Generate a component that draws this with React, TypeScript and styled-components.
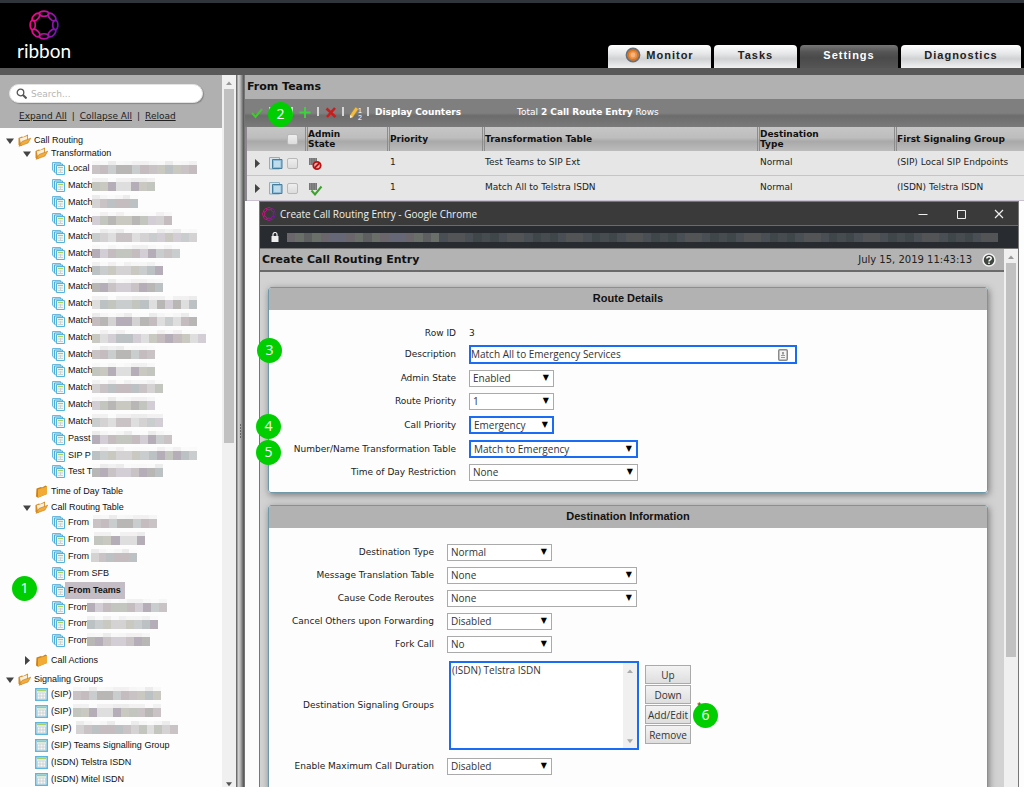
import React from "react";
import styled, { createGlobalStyle, css } from "styled-components";

const verdana = `"DejaVu Sans", Verdana, sans-serif`;
const arial = `"Liberation Sans", Arial, sans-serif`;
const segoe = `"Open Sans", "Segoe UI", sans-serif`;

const GlobalStyle = createGlobalStyle`
  *, *::before, *::after { box-sizing: border-box; }
  body { margin: 0; background: #fdfdfd; font-family: ${verdana}; font-size: 9px; color: #222; }
  ul { list-style: none; margin: 0; padding: 0; }
  svg { display: block; flex: none; }
`;

const Page = styled.div`
  height: 100vh;
  display: flex;
  flex-direction: column;
  overflow: hidden;
`;

/* ---------- top banner ---------- */

const Banner = styled.header`
  flex: none;
  height: 75px;
  display: flex;
  justify-content: space-between;
  align-items: flex-end;
  padding: 0 3px 0 17px;
  background: #000;
  border-top: 3px solid #2f353b;
  border-bottom: 7px solid #595959;
`;

const Brand = styled.div`
  align-self: stretch;
  display: flex;
  flex-direction: column;
  align-items: center;
  padding-top: 7px;
  color: #fff;
  font: 400 19px/22px Lato, sans-serif;
`;

const Tabs = styled.nav`
  display: flex;
  gap: 3px;
`;

const Tab = styled.button<{ $width: number; $active?: boolean }>`
  width: ${(p) => p.$width}px;
  height: 23px;
  display: flex;
  align-items: center;
  justify-content: center;
  gap: 5px;
  padding: 0 0 3px;
  border: 0;
  border-radius: 4px 4px 0 0;
  font: bold 11px/14px ${arial};
  letter-spacing: 1px;
  color: ${(p) => (p.$active ? "#fff" : "#222")};
  background: ${(p) =>
    p.$active
      ? "linear-gradient(#777, #555 30%, #4a4a4a 55%, #555)"
      : "linear-gradient(#fff, #e4e5e7 40%, #cfd1d3 60%, #f2f2f2)"};
`;

/* ---------- left tree ---------- */

const Columns = styled.div`
  flex: 1;
  min-height: 0;
  display: flex;
`;

const Sidebar = styled.aside`
  flex: none;
  width: 222px;
`;

const SearchArea = styled.div`
  background: #b0b0b0;
  height: 53px;
  padding: 9px 19px 0 9px;
`;

const SearchBox = styled.label`
  display: flex;
  align-items: center;
  gap: 4px;
  height: 19px;
  padding: 0 6px;
  background: #fff;
  border: 1px solid #e4e4e4;
  border-radius: 10px;
  box-shadow: 1px 1px 1px #888;
`;

const SearchInput = styled.input`
  flex: 1;
  min-width: 0;
  border: 0;
  outline: 0;
  padding: 0;
  background: none;
  font: 9px/12px ${verdana};
  &::placeholder { color: #b5b5b5; opacity: 1; }
`;

const TreeLinks = styled.div`
  display: flex;
  gap: 5px;
  padding: 7px 0 0 10px;
  line-height: 12px;
  a { color: #222; }
`;

const Tree = styled.ul`
  padding-top: 6px;
  font-family: ${arial};
  color: #111;
`;

const TreeRow = styled.div<{ $level: number; $kind: "open" | "closed" | "leaf" }>`
  position: relative;
  display: flex;
  align-items: center;
  gap: 3px;
  height: ${(p) => (p.$kind === "leaf" ? 17 : p.$kind === "open" ? 13 : 19)}px;
  padding-left: ${(p) => 6 + p.$level * 17}px;
  margin-top: ${(p) => (p.$kind === "closed" ? 2 : 0)}px;
`;

const SectionItem = styled.li`
  & + & { margin-top: 3px; }
`;

const LeafItem = styled.li`
  &:nth-child(6n) ${TreeRow} { height: 16px; }
`;

const Twisty = styled.span`
  width: 9px;
  flex: none;
`;

const TreeText = styled.span<{ $width?: number; $selected?: boolean }>`
  line-height: 17px;
  white-space: nowrap;
  flex: none;
  ${(p) => p.$width && css`width: ${p.$width}px;`}
  ${(p) =>
    p.$selected &&
    css`
      margin-left: -3px;
      padding: 0 4px 0 3px;
      font-weight: bold;
      background: #c5bdc6;
    `}
`;

const MosaicBox = styled.span<{ $width: number; $gap: number }>`
  position: relative;
  flex: none;
  width: ${(p) => p.$width}px;
  margin: 0 0 3px ${(p) => p.$gap - 3}px;
  display: grid;
  grid-template-rows: 4px 9px;
`;

const MosaicLine = styled.span`
  display: flex;
`;

const Tile = styled.i<{ $color: string }>`
  flex: 1;
  background: ${(p) => p.$color};
`;

/* ---------- scroll bars and splitter ---------- */

const ScrollTrack = styled.div`
  flex: none;
  width: 14px;
  display: flex;
  flex-direction: column;
  align-items: center;
  justify-content: space-between;
  padding: 5px 0 0;
  background: #f0f0f0;
`;

const ScrollThumb = styled.div<{ $share: number }>`
  width: 10px;
  height: ${(p) => p.$share}%;
  margin: 3px 0 auto;
  background: #c1c1c1;
`;

const Splitter = styled.div`
  flex: none;
  width: 9px;
  display: flex;
  align-items: center;
  justify-content: center;
  background: linear-gradient(90deg, #6e6e6e 0 1px, #d5d5d5 2px, #bdbdbd 4px, #6a6a6a 7px, #4f4f4f 8px, #999 9px);
`;

/* ---------- main pane ---------- */

const Main = styled.main`
  flex: 1;
  min-width: 0;
  display: flex;
  flex-direction: column;
`;

const PaneTitle = styled.h1`
  margin: 0;
  height: 24px;
  padding-left: 2px;
  background: #b1b1b1;
  color: #111;
  font: bold 11px/24px ${verdana};
`;

const Toolbar = styled.div`
  position: relative;
  height: 28px;
  display: flex;
  align-items: center;
  padding: 0 6px 3px;
  background: linear-gradient(#7f7f7f 0 50%, #6c6c6c 60%, #7a7a7a);
  color: #fff;
  white-space: nowrap;
`;

const ToolButton = styled.button`
  width: 12px;
  height: 16px;
  padding: 2px 0 0;
  border: 0;
  background: none;
`;

const Divider = styled.span<{ $before?: number; $after?: number }>`
  width: 2px;
  height: 9px;
  margin: 0 ${(p) => p.$after ?? 6}px 0 ${(p) => p.$before ?? 6}px;
  background: #d6d6d6;
`;

const TextButton = styled.button`
  padding: 0;
  border: 0;
  background: none;
  color: #fff;
  font: bold 9px/12px ${verdana};
`;

const RowTotal = styled.span`
  margin-left: 56px;
  line-height: 12px;
`;

const TableFrame = styled.div`
  padding-left: 2px;
  background: #8b878c;
`;

const Table = styled.table`
  width: 100%;
  table-layout: fixed;
  border-collapse: separate;
  border-spacing: 0;
  background: #e6e6e6;
`;

const Th = styled.th<{ $width?: number }>`
  width: ${(p) => (p.$width ? `${p.$width}px` : "auto")};
  height: 24px;
  padding: 0;
  border-left: 3px double #8c8c8c;
  background: linear-gradient(#c6c6c6, #bdbdbd 45%, #a9a9a9 60%, #bcbcbc);
  color: #111;
  text-align: left;
  font: bold 9px/10px ${verdana};
  &:first-child { border-left: 0; }
`;

const Td = styled.td`
  height: 25px;
  padding: 0 0 2px 3px;
  border-bottom: 1px solid #c9c0d2;
  line-height: 12px;
  white-space: nowrap;
`;

const StateCell = styled(Td)`
  padding-top: 2px;
  padding-bottom: 0;
`;

const RowTools = styled.div<{ $head?: boolean }>`
  display: flex;
  align-items: center;
  justify-content: flex-end;
  gap: 4px;
  padding-right: 7px;
  padding-top: ${(p) => (p.$head ? 0 : 2)}px;
`;

const Check = styled.input`
  appearance: none;
  width: 11px;
  height: 11px;
  margin: 0;
  border: 1px solid #b9b9b9;
  border-radius: 2px;
  background: linear-gradient(#eee, #dcdcdc);
`;

/* ---------- pop-up browser window ---------- */

const Window = styled.section`
  flex: 1;
  min-height: 0;
  margin: 0 5px 0 14px;
  display: flex;
  flex-direction: column;
  border: solid #777;
  border-width: 1px 1px 0;
`;

const WindowTitle = styled.div`
  flex: none;
  height: 24px;
  display: flex;
  align-items: center;
  gap: 4px;
  padding: 0 14px 0 2px;
  background: #3a3a3a;
  border-bottom: 1px solid #6b6b6b;
  color: #f0f0f0;
  font: 10px/14px ${segoe};
`;

const WindowControls = styled.div`
  display: flex;
  gap: 28px;
  margin-left: auto;
`;

const WindowButton = styled.button`
  padding: 0;
  border: 0;
  background: none;
`;

const AddressBar = styled.div`
  flex: none;
  height: 23px;
  display: flex;
  align-items: center;
  gap: 8px;
  padding: 0 20px 0 11px;
  background: #282c30;
  border-bottom: 1px solid #777;
`;

const AddressTiles = styled.div`
  flex: 1;
  height: 9px;
  display: flex;
`;

const WindowBody = styled.div`
  flex: 1;
  min-height: 0;
  display: flex;
  background: #d2d2d2;
`;

const WindowContent = styled.div`
  flex: 1;
  min-width: 0;
`;

const DialogHead = styled.div`
  height: 23px;
  display: flex;
  align-items: center;
  gap: 10px;
  padding: 0 8px 0 2px;
  background: #b3b3b3;
  border-bottom: 2px solid #6b6b6b;
`;

const DialogTitle = styled.h2`
  margin: 0 auto 0 0;
  color: #111;
  font: bold 11px/14px ${verdana};
`;

const Stamp = styled.time`
  font-size: 10px;
`;

const Panels = styled.div`
  display: flex;
  flex-direction: column;
  gap: 12px;
  padding: 15px 16px 0 8px;
`;

const Panel = styled.fieldset`
  min-width: 0;
  margin: 0;
  padding: 0;
  border: 1px solid #6f98a8;
  border-radius: 3px;
  background: #fdfdfd;
  box-shadow: 1px 2px 7px #777;
`;

const PanelTitle = styled.h3`
  margin: 0;
  padding-bottom: 2px;
  background: #b2b2b2;
  border-radius: 2px 2px 0 0;
  color: #111;
  text-align: center;
  font: bold 11px/20px ${arial};
`;

const Fields = styled.div<{ $label: number; $top: number; $bottom: number }>`
  display: grid;
  row-gap: 6px;
  padding: ${(p) => p.$top}px 0 ${(p) => p.$bottom}px;
  --label: ${(p) => p.$label}px;
`;

const Field = styled.div`
  position: relative;
  display: grid;
  grid-template-columns: var(--label) auto;
  column-gap: 13px;
  align-items: center;
  justify-content: start;
`;

const Label = styled.label`
  text-align: right;
  line-height: 11px;
  white-space: nowrap;
`;

const PlainValue = styled.output`
  line-height: 11px;
`;

const outline = css<{ $marked?: boolean }>`
  border: ${(p) => (p.$marked ? "2px solid #1a6cf5" : "1px solid #aaa")};
`;

const SelectBox = styled.span<{ $width: number; $marked?: boolean }>`
  position: relative;
  width: ${(p) => p.$width}px;
  height: ${(p) => (p.$marked ? 18 : 17)}px;
  display: flex;
  background: #fff;
  ${outline}
  &::after {
    content: "▼";
    position: absolute;
    right: 4px;
    top: 0;
    font: 8px/14px ${verdana};
    color: #000;
    pointer-events: none;
  }
`;

const Select = styled.select`
  appearance: none;
  flex: 1;
  border: 0;
  outline: 0;
  padding: 0 14px 0 3px;
  background: none;
  color: #333;
  font: 10px/15px ${segoe};
`;

const InputBox = styled.span<{ $marked?: boolean }>`
  width: 328px;
  height: 19px;
  display: flex;
  align-items: center;
  padding-right: 7px;
  background: #fff;
  ${outline}
`;

const TextInput = styled.input`
  flex: 1;
  border: 0;
  outline: 0;
  padding: 0;
  background: none;
  color: #333;
  font: 10px/15px ${segoe};
`;

const GroupPicker = styled.div`
  display: flex;
  align-items: center;
  gap: 6px;
  padding: 2px 0 2px 2px;
`;

const ListFrame = styled.div`
  width: 190px;
  height: 89px;
  display: flex;
  background: #fff;
  border: 2px solid #1a6cf5;
`;

const ListScroll = styled(ScrollTrack)`
  padding-bottom: 4px;
`;

const List = styled.select`
  flex: 1;
  min-width: 0;
  border: 0;
  outline: 0;
  padding: 0;
  background: none;
  scrollbar-width: none;
  color: #333;
  font: 10px/14px ${segoe};
  option { padding: 0 1px; min-height: 14px; }
`;

const ButtonStack = styled.div`
  display: grid;
  gap: 1px;
  padding-bottom: 2px;
`;

const PushButton = styled.button`
  width: 46px;
  height: 19px;
  padding: 0;
  border: 1px solid #aaa;
  background: linear-gradient(#f3f3f3, #dedede);
  color: #333;
  font: 10px/14px ${segoe};
`;

const Badge = styled.span<{ $left: number; $top: number }>`
  position: absolute;
  left: ${(p) => p.$left}px;
  top: ${(p) => p.$top}px;
  z-index: 2;
  width: 25px;
  height: 25px;
  border-radius: 50%;
  background: #00ce00;
  color: #fff;
  text-align: center;
  font: 14px/24px ${segoe};
`;

/* ---------- drawings ---------- */

function RingMark({ size, id }: { size: number; id: string }) {
  return (
    <svg width={size} height={size} viewBox="0 0 30 30" fill="none" aria-hidden>
      <defs>
        <linearGradient id={id} gradientUnits="userSpaceOnUse" x1="0" y1="12" x2="30" y2="18">
          <stop offset="0" stopColor="#f5087f" />
          <stop offset="0.5" stopColor="#c010a0" />
          <stop offset="1" stopColor="#6418b4" />
        </linearGradient>
      </defs>
      <g stroke={`url(#${id})`} strokeWidth="1.7">
        {[0, 45, 90, 135, 180, 225, 270, 315].map((a) => {
          const r = (a * Math.PI) / 180;
          const at = (along: number, out: number) =>
            `${(15 + (11.3 + out) * Math.cos(r) - along * Math.sin(r)).toFixed(2)} ${(15 + (11.3 + out) * Math.sin(r) + along * Math.cos(r)).toFixed(2)}`;
          return (
            <path
              key={a}
              d={`M${at(-5, 0)}C${at(-4, 3.4)} ${at(4, 3.4)} ${at(5, 0)}C${at(4, -3.4)} ${at(-4, -3.4)} ${at(-5, 0)}Z`}
            />
          );
        })}
      </g>
    </svg>
  );
}

const Arrow = ({ dir, color = "#444", w = 8 }: { dir: "up" | "down" | "right"; color?: string; w?: number }) => (
  <svg width={w} height={dir === "right" ? 9 : 6} viewBox={dir === "right" ? "0 0 8 9" : "0 0 8 6"} aria-hidden>
    <path fill={color} d={dir === "up" ? "M1 5L4 1.5 7 5Z" : dir === "down" ? "M0 .5H8L4 6Z" : "M2 0L7 4.5 2 9Z"} />
  </svg>
);

const FolderOpen = () => (
  <svg width="13" height="13" viewBox="0 0 13 13" aria-hidden>
    <path d="M.5 4L4 2.500 5 3 10 .5V6L3 12 .5 11Z" fill="#d68a1e" />
    <path d="M1.800 4.500L9.200 2V7L3 10Z" fill="#f8efdc" />
    <path d="M1 12.300L4 7.500 12.700 4.200 10 9Z" fill="#f3ad3c" stroke="#c47a18" strokeWidth=".6" />
  </svg>
);

const FolderClosed = () => (
  <svg width="13" height="13" viewBox="0 0 13 13" aria-hidden>
    <path d="M1.500 3.500L6 2 7 2.500 10.500 .5 12 1.500V9L3 12.700 1 11.500Z" fill="#c98218" />
    <path d="M3 4.500L12 1.500V9L3 12.500Z" fill="#f2ab35" />
  </svg>
);

const PagesIcon = () => (
  <svg width="13" height="13" viewBox="0 0 13 13" aria-hidden>
    <path d="M.5 .5H8.5V10H2.5L.5 8Z" fill="#d6eef8" stroke="#6bb9dc" />
    <path d="M2.500 2H10.500V11.500H4L2.500 10Z" fill="#d6eef8" stroke="#4fabd6" />
    <path d="M4.500 3.500H12.500V12.500H4.500Z" fill="#f2f6f6" stroke="#55b4de" />
    <path d="M6 5.500H11" stroke="#a9cf63" strokeWidth="1.2" />
    <path d="M6 8H11M6 10.500H11M8.500 7V11" stroke="#cdd3d3" />
  </svg>
);

const SheetIcon = () => (
  <svg width="13" height="13" viewBox="0 0 13 13" aria-hidden>
    <path d="M.75 .75H12.250V12.250H.75Z" fill="#e6f2f7" stroke="#5db6e0" strokeWidth="1.500" />
    <path d="M2 2.500H11" stroke="#a9cf63" strokeWidth="1.4" />
    <path d="M2.500 5H10.500V11H2.500ZM2.500 8H10.500M5 5V11M8 5V11" fill="#f7f7f7" stroke="#c6cdcf" strokeWidth=".8" />
  </svg>
);

const CheckIcon = () => (
  <svg width="12" height="13" viewBox="0 0 12 13" fill="none" aria-hidden>
    <path d="M1 7L4.500 11 11 3" stroke="#45c832" strokeWidth="2" />
  </svg>
);
const PlusIcon = () => (
  <svg width="12" height="13" viewBox="0 0 12 13" aria-hidden>
    <path d="M6 1V12M.5 6.500H11.500" stroke="#3fd03f" strokeWidth="2" />
  </svg>
);
const CrossIcon = () => (
  <svg width="12" height="13" viewBox="0 0 12 13" aria-hidden>
    <path d="M1.500 2.500L10.500 11M10 2L2 11" stroke="#cc1c1c" strokeWidth="2.600" />
  </svg>
);
const PencilIcon = () => (
  <svg width="14" height="14" viewBox="0 0 14 14" aria-hidden>
    <path d="M1 9L6.500 1 9.500 3 4 11 1 12Z" fill="#f2bd42" stroke="#a8842c" strokeWidth=".6" />
    <path d="M1 9L4 11 1 12Z" fill="#f5ead0" />
    <text x="9" y="7" fontSize="7" fill="#fff" fontFamily="Liberation Sans">1</text>
    <text x="9" y="14" fontSize="7" fill="#fff" fontFamily="Liberation Sans">2</text>
  </svg>
);

const DetailIcon = () => (
  <svg width="14" height="13" viewBox="0 0 14 13" aria-hidden>
    <path d="M.5 .5H10.500V12H.5Z" fill="#d8e4ea" stroke="#8fb0c0" />
    <path d="M3.500 2.500H13V11.500H3.500Z" fill="#8fbbd6" stroke="#457d9d" />
    <path d="M5 4H11.500V10H5Z" fill="#bfdcec" />
  </svg>
);

const StateIcon = ({ on }: { on: boolean }) => (
  <svg width="15" height="14" viewBox="0 0 15 14" aria-hidden>
    <path d="M1 1H9V8H1Z" fill="#777" />
    <path d="M2.500 1V8M5 1V8M7.500 1V8" stroke="#999" strokeWidth=".6" />
    {on ? (
      <path d="M3.500 8.500L7 12.500 13.500 4.500" fill="none" stroke="#3da22d" strokeWidth="2" />
    ) : (
      <g>
        <circle cx="9" cy="8.500" r="3.700" fill="#e9b5b5" stroke="#b81414" strokeWidth="1.800" />
        <path d="M6.500 11L11.500 6" stroke="#b81414" strokeWidth="1.800" />
      </g>
    )}
  </svg>
);

const MonitorDot = () => (
  <svg width="16" height="16" viewBox="0 0 16 16" aria-hidden>
    <circle cx="8" cy="8" r="6.500" fill="#e8893c" stroke="#65707c" strokeWidth="1.800" />
    <circle cx="8" cy="8" r="4.800" fill="#ec9148" stroke="#d9741f" strokeWidth="1.400" />
    <circle cx="8" cy="8" r="2.400" fill="#f5b47c" />
  </svg>
);

/* ---------- data ---------- */

type LeafData = { text: string; width?: number; hidden?: number; gap?: number; current?: boolean };

const match = (hidden: number): LeafData => ({ text: "Match", width: 24, hidden });
const transformations: LeafData[] = [
  { text: "Local", width: 24, hidden: 105 },
  ...[63, 46, 80, 105, 88, 71, 71, 105, 105, 114, 63, 63, 71, 63, 71].map(match),
  { text: "Passt", width: 24, hidden: 80 },
  { text: "SIP P", width: 24, hidden: 105 },
  { text: "Test T", width: 24, hidden: 71 },
];
const routingTables: LeafData[] = [
  { text: "From", width: 22, gap: 3, hidden: 64 },
  { text: "From", width: 22, gap: 4, hidden: 51 },
  { text: "From", width: 22, gap: 1, hidden: 46 },
  { text: "From SFB" },
  { text: "From Teams", current: true },
  { text: "From", width: 19, hidden: 80 },
  { text: "From", width: 19, hidden: 71 },
  { text: "From", width: 19, hidden: 63 },
];
const signalingGroups: LeafData[] = [
  { text: "(SIP)", width: 22, hidden: 88 },
  { text: "(SIP)", width: 22, hidden: 88 },
  { text: "(SIP)", width: 22, gap: 3, hidden: 102 },
  { text: "(SIP) Teams Signalling Group" },
  { text: "(ISDN) Telstra ISDN" },
  { text: "(ISDN) Mitel ISDN" },
];

const tones = ["#c9c3c6", "#c9cdcd", "#dededf", "#c3c6bf", "#b5adb8", "#c4bcbe", "#d5d2d3", "#bcc2c3", "#c9c9c2", "#d3ced5", "#b9b6b6"];
const faint = ["#f6f6f6", "#fbfbfb", "#f1f1f1", "#ececed", "#f8f8f8", "#f2f0f1", "#fafafa"];
const dark = ["#4a4f55", "#41484c", "#4f5a5c", "#474c50", "#3f474b", "#525456", "#444b55"];
const warm = ["#6a666b", "#777a79", "#6d777b", "#5d5f61", "#6b6f6a", "#666877", "#7a6f72"];

function Mosaic({ width, gap = 0, seed }: { width: number; gap?: number; seed: number }) {
  const cells = Array.from({ length: Math.max(1, Math.round(width / 8)) }, (_, i) => i);
  return (
    <MosaicBox $width={width} $gap={gap} aria-hidden>
      <MosaicLine>{cells.map((i) => <Tile key={i} $color={faint[(i * 3 + seed * 5 + i * i) % faint.length]} />)}</MosaicLine>
      <MosaicLine>{cells.map((i) => <Tile key={i} $color={tones[(i * 4 + seed * 3 + i * i) % tones.length]} />)}</MosaicLine>
    </MosaicBox>
  );
}

function Leaves({ items, level, icon }: { items: LeafData[]; level: number; icon: React.ReactNode }) {
  return (
    <ul>
      {items.map((it, i) => (
        <LeafItem key={i}>
          <TreeRow $level={level} $kind="leaf">
            <Twisty />
            {icon}
            <TreeText $width={it.width} $selected={it.current}>{it.text}</TreeText>
            {it.hidden && <Mosaic width={it.hidden} gap={it.gap} seed={i} />}
            {it.current && <Badge $left={12} $top={-6}>1</Badge>}
          </TreeRow>
        </LeafItem>
      ))}
    </ul>
  );
}

function Branch({ text, level, open, empty }: { text: string; level: number; open?: boolean; empty?: boolean }) {
  return (
    <TreeRow $level={level} $kind={open ? "open" : "closed"}>
      <Twisty>{!empty && <Arrow dir={open ? "down" : "right"} />}</Twisty>
      {open ? <FolderOpen /> : <FolderClosed />}
      <TreeText>{text}</TreeText>
    </TreeRow>
  );
}

function SelectField(p: { id: string; label: string; value: string; width: number; marked?: boolean; badge?: React.ReactNode }) {
  return (
    <Field>
      <Label htmlFor={p.id}>{p.label}</Label>
      <SelectBox $width={p.width} $marked={p.marked}>
        <Select id={p.id} defaultValue={p.value}>
          <option>{p.value}</option>
        </Select>
      </SelectBox>
      {p.badge}
    </Field>
  );
}

const routes = [
  { on: false, priority: 1, table: "Test Teams to SIP Ext", type: "Normal", group: "(SIP) Local SIP Endpoints" },
  { on: true, priority: 1, table: "Match All to Telstra ISDN", type: "Normal", group: "(ISDN) Telstra ISDN" },
];

export default function App() {
  return (
    <Page>
      <GlobalStyle />
      <Banner>
        <Brand>
          <RingMark size={30} id="ring-large" />
          ribbon
        </Brand>
        <Tabs>
          <Tab $width={103}><MonitorDot />Monitor</Tab>
          <Tab $width={83}>Tasks</Tab>
          <Tab $width={98} $active>Settings</Tab>
          <Tab $width={120}>Diagnostics</Tab>
        </Tabs>
      </Banner>
      <Columns>
        <Sidebar>
          <SearchArea>
            <SearchBox>
              <svg width="11" height="11" viewBox="0 0 11 11" fill="none" stroke="#555" aria-hidden>
                <circle cx="4.500" cy="4.500" r="3.300" strokeWidth="1.300" />
                <path d="M7 7L10.500 10.500" strokeWidth="2" />
              </svg>
              <SearchInput placeholder="Search..." aria-label="Search" />
            </SearchBox>
            <TreeLinks>
              <a href="#expand">Expand All</a>|<a href="#collapse">Collapse All</a>|<a href="#reload">Reload</a>
            </TreeLinks>
          </SearchArea>
          <Tree>
            <SectionItem>
              <Branch text="Call Routing" level={0} open />
              <Branch text="Transformation" level={1} open />
              <Leaves items={transformations} level={2} icon={<PagesIcon />} />
              <Branch text="Time of Day Table" level={1} empty />
              <Branch text="Call Routing Table" level={1} open />
              <Leaves items={routingTables} level={2} icon={<PagesIcon />} />
              <Branch text="Call Actions" level={1} />
            </SectionItem>
            <SectionItem>
              <Branch text="Signaling Groups" level={0} open />
              <Leaves items={signalingGroups} level={1} icon={<SheetIcon />} />
            </SectionItem>
          </Tree>
        </Sidebar>
        <ScrollTrack>
          <Arrow dir="up" color="#999" />
          <ScrollThumb $share={50} />
          <Arrow dir="down" color="#555" w={6} />
        </ScrollTrack>
        <Splitter>
          <svg width="3" height="14" viewBox="0 0 3 14" aria-hidden>
            <path d="M1 1H2M1 4H2M1 7H2M1 10H2M1 13H2" stroke="#222" strokeWidth="1" />
          </svg>
        </Splitter>
        <Main>
          <PaneTitle>From Teams</PaneTitle>
          <Toolbar>
            <ToolButton aria-label="Enable"><CheckIcon /></ToolButton>
            <Divider />
            <Divider $before={14} />
            <ToolButton aria-label="Create"><PlusIcon /></ToolButton>
            <Divider />
            <ToolButton aria-label="Delete"><CrossIcon /></ToolButton>
            <Divider $before={5} $after={5} />
            <ToolButton aria-label="Resequence"><PencilIcon /></ToolButton>
            <Divider />
            <TextButton>Display Counters</TextButton>
            <RowTotal>Total <b>2 Call Route Entry</b> Rows</RowTotal>
            <Badge $left={23} $top={3}>2</Badge>
          </Toolbar>
          <TableFrame>
            <Table>
              <thead>
                <tr>
                  <Th $width={58}><RowTools $head><Check type="checkbox" aria-label="Select all" /></RowTools></Th>
                  <Th $width={82}>Admin<br />State</Th>
                  <Th $width={95}>Priority</Th>
                  <Th>Transformation Table</Th>
                  <Th $width={137}>Destination<br />Type</Th>
                  <Th $width={130}>First Signaling Group</Th>
                </tr>
              </thead>
              <tbody>
                {routes.map((r) => (
                  <tr key={r.table}>
                    <Td>
                      <RowTools>
                        <Arrow dir="right" />
                        <span />
                        <DetailIcon />
                        <Check type="checkbox" aria-label={r.table} />
                      </RowTools>
                    </Td>
                    <StateCell><StateIcon on={r.on} /></StateCell>
                    <Td>{r.priority}</Td>
                    <Td>{r.table}</Td>
                    <Td>{r.type}</Td>
                    <Td>{r.group}</Td>
                  </tr>
                ))}
              </tbody>
            </Table>
          </TableFrame>
          <Window>
            <WindowTitle>
              <RingMark size={14} id="ring-small" />
              Create Call Routing Entry - Google Chrome
              <WindowControls>
                <WindowButton aria-label="Minimize">
                  <svg width="10" height="10" viewBox="0 0 10 10"><path d="M.5 5.500H9.500" stroke="#eee" /></svg>
                </WindowButton>
                <WindowButton aria-label="Maximize">
                  <svg width="10" height="10" viewBox="0 0 10 10"><path d="M1.500 1.500H9.500V9.500H1.500Z" fill="none" stroke="#eee" /></svg>
                </WindowButton>
                <WindowButton aria-label="Close">
                  <svg width="10" height="10" viewBox="0 0 10 10"><path d="M1 1L9 9M9 1L1 9" stroke="#eee" strokeWidth="1.200" /></svg>
                </WindowButton>
              </WindowControls>
            </WindowTitle>
            <AddressBar>
              <svg width="8" height="10" viewBox="0 0 8 10" aria-hidden>
                <path d="M.5 4H7.500V10H.5Z" fill="#eee" />
                <path d="M2 4V2.500A2 2 0 0 1 6 2.500V4" fill="none" stroke="#eee" strokeWidth="1.200" />
              </svg>
              <AddressTiles aria-hidden>
                {Array.from({ length: 84 }, (_, i) => (
                  <Tile key={i} $color={(i < 18 ? warm : dark)[(i * 3 + i * i) % 7]} />
                ))}
              </AddressTiles>
            </AddressBar>
            <WindowBody>
              <WindowContent>
                <DialogHead>
                  <DialogTitle>Create Call Routing Entry</DialogTitle>
                  <Stamp>July 15, 2019 11:43:13</Stamp>
                  <svg width="14" height="14" viewBox="0 0 14 14" role="img" aria-label="Help">
                    <circle cx="7" cy="7" r="6" fill="#3f463f" stroke="#f2f2f2" strokeWidth="1.500" />
                    <path d="M4.800 5.600C4.800 3 9.200 3 9.200 5.500 9.200 7 7 6.900 7 8.400M7 9.500V11" fill="none" stroke="#fff" strokeWidth="1.500" />
                  </svg>
                </DialogHead>
                <Panels>
                  <Panel>
                    <PanelTitle>Route Details</PanelTitle>
                    <Fields $label={187} $top={18} $bottom={11}>
                      <Field>
                        <Label htmlFor="row-id">Row ID</Label>
                        <PlainValue id="row-id">3</PlainValue>
                      </Field>
                      <Field>
                        <Label htmlFor="description">Description</Label>
                        <InputBox $marked>
                          <TextInput id="description" defaultValue="Match All to Emergency Services" />
                          <svg width="10" height="12" viewBox="0 0 10 12" aria-hidden>
                            <rect x=".75" y=".75" width="8.500" height="10.500" rx="1" fill="#f4f4f4" stroke="#8a8a8a" strokeWidth="1.500" />
                            <circle cx="5" cy="4" r="1.100" fill="#888" />
                            <path d="M5 4V7M3 6.500H7M3 8.500H7" stroke="#999" />
                          </svg>
                        </InputBox>
                        <Badge $left={-12} $top={-7}>3</Badge>
                      </Field>
                      <SelectField id="admin" label="Admin State" value="Enabled" width={85} />
                      <SelectField id="priority" label="Route Priority" value="1" width={85} />
                      <SelectField id="call" label="Call Priority" value="Emergency" width={85} marked badge={<Badge $left={-13} $top={-2}>4</Badge>} />
                      <SelectField id="number" label="Number/Name Transformation Table" value="Match to Emergency" width={169} marked badge={<Badge $left={-13} $top={0}>5</Badge>} />
                      <SelectField id="time" label="Time of Day Restriction" value="None" width={169} />
                    </Fields>
                  </Panel>
                  <Panel>
                    <PanelTitle>Destination Information</PanelTitle>
                    <Fields $label={165} $top={16} $bottom={40}>
                      <SelectField id="dest" label="Destination Type" value="Normal" width={105} />
                      <SelectField id="message" label="Message Translation Table" value="None" width={190} />
                      <SelectField id="cause" label="Cause Code Reroutes" value="None" width={190} />
                      <SelectField id="cancel" label="Cancel Others upon Forwarding" value="Disabled" width={105} />
                      <SelectField id="fork" label="Fork Call" value="No" width={105} />
                      <Field>
                        <Label htmlFor="groups">Destination Signaling Groups</Label>
                        <GroupPicker>
                          <ListFrame>
                            <List id="groups" multiple size={5}>
                              <option>(ISDN) Telstra ISDN</option>
                            </List>
                            <ListScroll>
                              <Arrow dir="up" color="#aaa" />
                              <Arrow dir="down" color="#aaa" w={6} />
                            </ListScroll>
                          </ListFrame>
                          <ButtonStack>
                            <PushButton>Up</PushButton>
                            <PushButton>Down</PushButton>
                            <PushButton>Add/Edit</PushButton>
                            <PushButton>Remove</PushButton>
                          </ButtonStack>
                          <span>*</span>
                        </GroupPicker>
                        <Badge $left={424} $top={44}>6</Badge>
                      </Field>
                      <SelectField id="maximum" label="Enable Maximum Call Duration" value="Disabled" width={105} />
                    </Fields>
                  </Panel>
                </Panels>
              </WindowContent>
              <ScrollTrack>
                <Arrow dir="up" color="#999" />
                <ScrollThumb $share={74} />
              </ScrollTrack>
            </WindowBody>
          </Window>
        </Main>
      </Columns>
    </Page>
  );
}
